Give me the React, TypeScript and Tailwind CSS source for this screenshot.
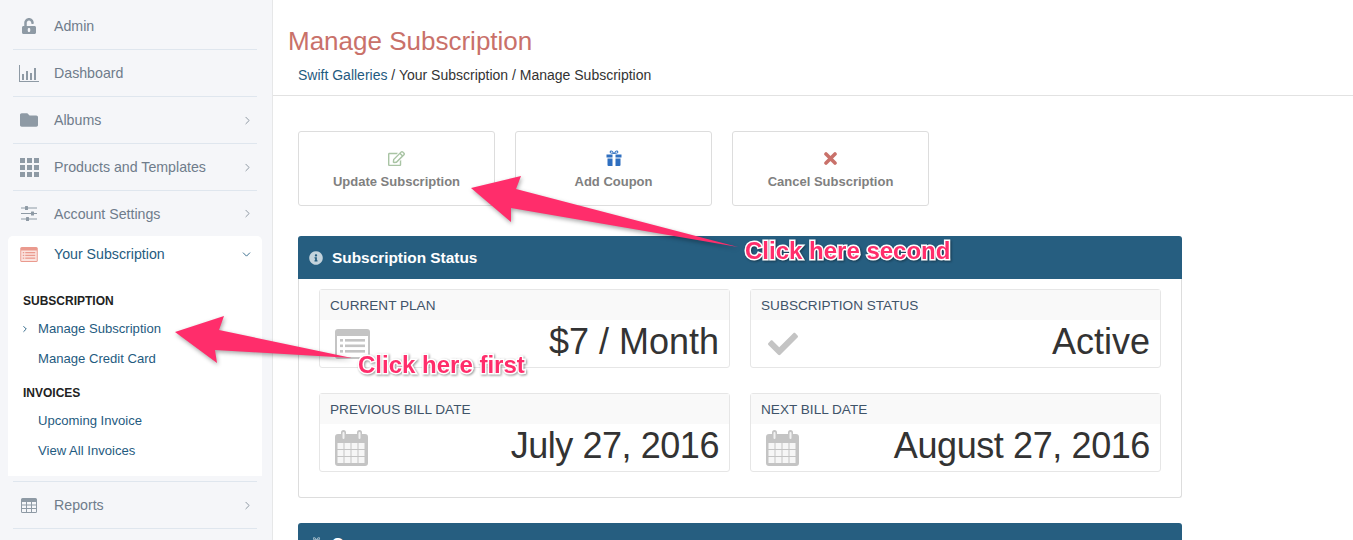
import type { ReactNode } from 'react';
import { ChevronDown, ChevronRight } from 'lucide-react';
import { FaCheck, FaFolder, FaInfoCircle, FaRegEdit, FaUnlockAlt } from 'react-icons/fa';

/* ------------------ ICONS ------------------ */
function ListAltIcon({ w, h, cell = '#fff' }: { w: number; h: number; cell?: string }) {
  return (
    <svg width={w} height={h} viewBox="0 0 35 30" fill="currentColor">
      <rect width="35" height="30" rx="3" />
      <rect x="2" y="7" width="31" height="21" fill={cell} />
      {[10, 15.5, 21].map(y => (
        <g key={y}>
          <rect x="5" y={y} width="3" height="2.6" />
          <rect x="10" y={y} width="20" height="2.6" />
        </g>
      ))}
    </svg>
  );
}

function CalendarIcon() {
  const rows = [13, 20, 27];
  const cols = [2.5, 9.5, 16.5, 23.5];
  return (
    <svg width="33" height="36" viewBox="0 0 33 36" fill="currentColor">
      <path d="M3 4h3V2.5a2.5 2.5 0 0 1 5 0V4h11V2.5a2.5 2.5 0 0 1 5 0V4h3a3 3 0 0 1 3 3v26a3 3 0 0 1-3 3H3a3 3 0 0 1-3-3V7a3 3 0 0 1 3-3z" />
      <rect x="7.5" y="2" width="2" height="7" rx="1" fill="#f2f2f2" />
      <rect x="23.5" y="2" width="2" height="7" rx="1" fill="#f2f2f2" />
      {rows.map(y =>
        cols.map(x => <rect key={`${x}-${y}`} x={x} y={y} width="6" height="6" fill="#f6f6f6" />)
      )}
    </svg>
  );
}

function BarsIcon() {
  return (
    <svg width="20" height="17" viewBox="0 0 20 17" fill="currentColor">
      <rect x="0" y="0" width="1" height="17" />
      <rect x="0" y="16" width="20" height="1" />
      <rect x="3" y="9" width="2" height="6" />
      <rect x="7" y="6" width="2" height="9" />
      <rect x="11" y="8" width="2" height="7" />
      <rect x="15" y="3" width="2" height="12" />
    </svg>
  );
}

function GridIcon() {
  const pos = [0, 7, 14];
  return (
    <svg width="19" height="19" viewBox="0 0 19 19" fill="currentColor">
      {pos.map(y => pos.map(x => <rect key={`${x}-${y}`} x={x} y={y} width="5" height="5" />))}
    </svg>
  );
}

function SlidersIcon() {
  return (
    <svg width="16" height="15" viewBox="0 0 16 15" fill="currentColor">
      <rect y="1.5" width="16" height="1" />
      <rect y="7" width="16" height="1" />
      <rect y="12.5" width="16" height="1" />
      <rect x="4" y="0" width="3" height="4" rx="0.5" />
      <rect x="10" y="5.5" width="3" height="4" rx="0.5" />
      <rect x="5" y="11" width="3" height="4" rx="0.5" />
    </svg>
  );
}

function TableIcon() {
  return (
    <svg width="16" height="15" viewBox="0 0 16 15" fill="currentColor">
      <path
        fillRule="evenodd"
        d="M1.5 0h13A1.5 1.5 0 0 1 16 1.5v12a1.5 1.5 0 0 1-1.5 1.5h-13A1.5 1.5 0 0 1 0 13.500v-12A1.500 1.500 0 0 1 1.500 0zM1 4v2.500h4V4zm5 0v2.500h4V4zm5 0v2.500h4V4zM1 7.500V10h4V7.500zm5 0V10h4V7.500zm5 0V10h4V7.500zM1 11v3h4v-3zm5 0v3h4v-3zm5 0v3h4v-3z"
      />
    </svg>
  );
}

function GiftIcon({ className, size = 16 }: { className: string; size?: number }) {
  return (
    <svg width={size} height={size} viewBox="0 0 16 16" className={className} fill="currentColor">
      <path d="M8 4C6 4 3.600 3.800 3.600 2.100 3.600 1 4.400 0.400 5.200 0.400 6.600 0.400 7.500 2 8 3.200 8.500 2 9.400 0.400 10.800 0.400c0.800 0 1.600 0.600 1.600 1.700C12.400 3.800 10 4 8 4zM5.200 1.500c-0.300 0-0.600 0.200-0.600 0.600C4.600 2.800 5.800 3 6.800 3 6.400 2.200 5.800 1.500 5.200 1.500zm5.600 0C10.200 1.500 9.600 2.200 9.200 3c1 0 2.200-0.200 2.200-0.900 0-0.400-0.300-0.600-0.600-0.600z" />
      <path d="M0.500 4.500h6v3h-6zM9.500 4.500h6v3h-6zM1.500 8.500h5V16h-4a1 1 0 0 1-1-1zM9.500 8.500h5V15a1 1 0 0 1-1 1h-4z" />
    </svg>
  );
}

function CrossIcon() {
  return (
    <svg width="13" height="13" viewBox="0 0 13 13" className="text-[#c9716a]">
      <path d="M2 2l9 9M11 2l-9 9" stroke="currentColor" strokeWidth="3.600" strokeLinecap="round" />
    </svg>
  );
}

/* ------------------ DATA ------------------ */
const navTop = [
  { label: 'Admin', icon: <FaUnlockAlt size={16} />, arrow: false },
  { label: 'Dashboard', icon: <BarsIcon />, arrow: false },
  { label: 'Albums', icon: <FaFolder size={18} />, arrow: true },
  { label: 'Products and Templates', icon: <GridIcon />, arrow: true },
];

const actions = [
  { label: 'Update Subscription', icon: <FaRegEdit size={17} className="text-[#a9c4a4]" /> },
  { label: 'Add Coupon', icon: <GiftIcon size={16} className="text-[#2f6fc0]" /> },
  { label: 'Cancel Subscription', icon: <CrossIcon /> },
];

const stats = [
  { label: 'CURRENT PLAN', value: '$7 / Month', tight: '', icon: <ListAltIcon w={35} h={30} /> },
  { label: 'SUBSCRIPTION STATUS', value: 'Active', tight: '', icon: <FaCheck size={30} className="ml-[2px]" /> },
  { label: 'PREVIOUS BILL DATE', value: 'July 27, 2016', tight: 'tracking-[-0.45px]', icon: <CalendarIcon /> },
  { label: 'NEXT BILL DATE', value: 'August 27, 2016', tight: 'tracking-[-0.4px]', icon: <CalendarIcon /> },
];

/* ------------------ PARTS ------------------ */
function NavRow({ label, icon, arrow, last }: { label: string; icon: ReactNode; arrow?: boolean; last?: boolean }) {
  return (
    <div className={`ml-[13px] flex w-[244px] items-center text-[14.2px] text-[#6f7c8b] ${last ? 'h-[45px]' : 'h-[47px] border-b border-[#dfe6ee]'}`}>
      <span className="flex w-[41px] justify-center pr-[9px] text-[#8e9aa5]">{icon}</span>
      <span className="flex-1 pt-[2px]">{label}</span>
      {arrow && <ChevronRight size={13} strokeWidth={1.6} className="mr-[3px] text-[#7f8b97]" />}
    </div>
  );
}

function SubLink({ label, active }: { label: string; active?: boolean }) {
  return (
    <div className="relative flex h-[30px] items-center pl-[30px] text-[13.1px] text-[#1f5b7f]">
      {active && <ChevronRight size={10} strokeWidth={2.2} className="absolute left-[12px]" />}
      {label}
    </div>
  );
}

export default function App() {
  return (
    <div className="relative flex h-[540px] w-[1353px] overflow-hidden bg-white font-['Liberation_Sans',Arial,sans-serif]">
      {/* SIDEBAR */}
      <aside className="w-[273px] shrink-0 border-r border-[#e6e7e8] bg-[#f5f6f9] pt-[3px]">
        {navTop.map(n => (
          <NavRow key={n.label} {...n} />
        ))}
        <NavRow label="Account Settings" icon={<SlidersIcon />} arrow last />

        <div className="ml-[8px] h-[240px] w-[254px] rounded-t-[5px] bg-white">
          <div className="flex h-[36px] items-center pl-[5px] pr-[6px] text-[14.2px] text-[#1f5b7f]">
            <span className="flex w-[41px] justify-center pr-[9px] text-[#ea9a8e]">
              <ListAltIcon w={18} h={15} cell="#fbe4e0" />
            </span>
            <span className="flex-1 pt-[2px]">Your Subscription</span>
            <ChevronDown size={13} strokeWidth={1.6} className="mr-[3px]" />
          </div>
          <div className="mt-[17px] flex h-6 items-center pl-[15px] text-[12px] font-bold text-[#222]">SUBSCRIPTION</div>
          <div className="mt-px">
            <SubLink label="Manage Subscription" active />
            <SubLink label="Manage Credit Card" />
          </div>
          <div className="mt-[7px] flex h-6 items-center pl-[15px] text-[12px] font-bold text-[#222]">INVOICES</div>
          <div className="mt-px">
            <SubLink label="Upcoming Invoice" />
            <SubLink label="View All Invoices" />
          </div>
        </div>

        <div className="ml-[13px] mt-[5px] w-[244px] border-t border-[#dfe6ee]" />
        <NavRow label="Reports" icon={<TableIcon />} arrow />
      </aside>

      {/* MAIN */}
      <main className="flex-1">
        <header className="h-[96px] border-b border-[#e2e2e2] pl-[15px] pt-[25px]">
          <h1 className="text-[26px] leading-[32px] text-[#c9716a]">Manage Subscription</h1>
          <p className="mt-[8px] pl-[10px] text-[14px] leading-[20px] text-[#333]">
            <span className="text-[#1f5b7f]">Swift Galleries</span> / Your Subscription / Manage Subscription
          </p>
        </header>

        <div className="pl-[25px] pt-[35px]">
          <div className="flex gap-[20px]">
            {actions.map(a => (
              <div
                key={a.label}
                className="flex h-[75px] w-[197px] flex-col items-center rounded-[3px] border border-[#ddd] pt-[17px] text-[13px] font-bold text-[#808080]"
              >
                <span className="flex h-[18px] items-center">{a.icon}</span>
                <span className="mt-[7px] leading-[16px]">{a.label}</span>
              </div>
            ))}
          </div>

          <section className="mt-[30px] w-[884px]">
            <div className="flex h-[43px] items-center gap-[9px] rounded-t-[3px] bg-[#265e80] pl-[11px] text-[15.4px] font-bold text-white">
              <FaInfoCircle size={14} className="text-[#c3d3dc]" />
              Subscription Status
            </div>
            <div className="grid grid-cols-2 gap-x-[20px] gap-y-[25px] rounded-b-[3px] border border-t-0 border-[#ddd] px-[20px] pb-[25px] pt-[10px]">
              {stats.map(s => (
                <div key={s.label} className="h-[79px] rounded-[3px] border border-[#e6e6e6]">
                  <div className="flex h-[30px] items-center bg-[#f9f9f9] pl-[10px] pt-[2px] text-[13.6px] text-[#3f5469]">{s.label}</div>
                  <div className="flex h-[47px] items-center justify-between pl-[15px] pr-[10px]">
                    <span className="text-[#c4c4c4]">{s.icon}</span>
                    <span className={`mb-[4px] text-[36px] leading-[44px] text-[#333] ${s.tight}`}>{s.value}</span>
                  </div>
                </div>
              ))}
            </div>
          </section>

          <div className="mt-[25px] flex h-[43px] w-[884px] items-center gap-[9px] rounded-t-[3px] bg-[#265e80] pl-[12px] pb-[3px] text-[15.4px] font-bold text-white">
            <GiftIcon size={13} className="text-[#a9c0cd]" />
            Coupons
          </div>
        </div>
      </main>

      {/* ANNOTATIONS */}
      <svg className="pointer-events-none absolute left-0 top-0 drop-shadow-[1px_2px_2px_rgba(0,0,0,0.35)]" width="1353" height="540">
        <polygon points="175,332 224,316 219,330 352,358 215,350 217,363" fill="#ff2d6b" />
        <polygon points="471,188 521,176 516,189 738,247 511,208 511,222" fill="#ff2d6b" />
      </svg>
      <span className="absolute left-[358px] top-[351px] text-[24px] font-bold leading-[28px] text-[#ff2d6b] [-webkit-text-stroke:3px_white] [paint-order:stroke_fill] drop-shadow-[1px_1px_1px_rgba(0,0,0,0.4)]">
        Click here first
      </span>
      <span className="absolute left-[745px] top-[237px] text-[24px] font-bold leading-[28px] text-[#ff2d6b] [-webkit-text-stroke:3px_white] [paint-order:stroke_fill] drop-shadow-[1px_1px_1px_rgba(0,0,0,0.4)]">
        Click here second
      </span>
    </div>
  );
}
